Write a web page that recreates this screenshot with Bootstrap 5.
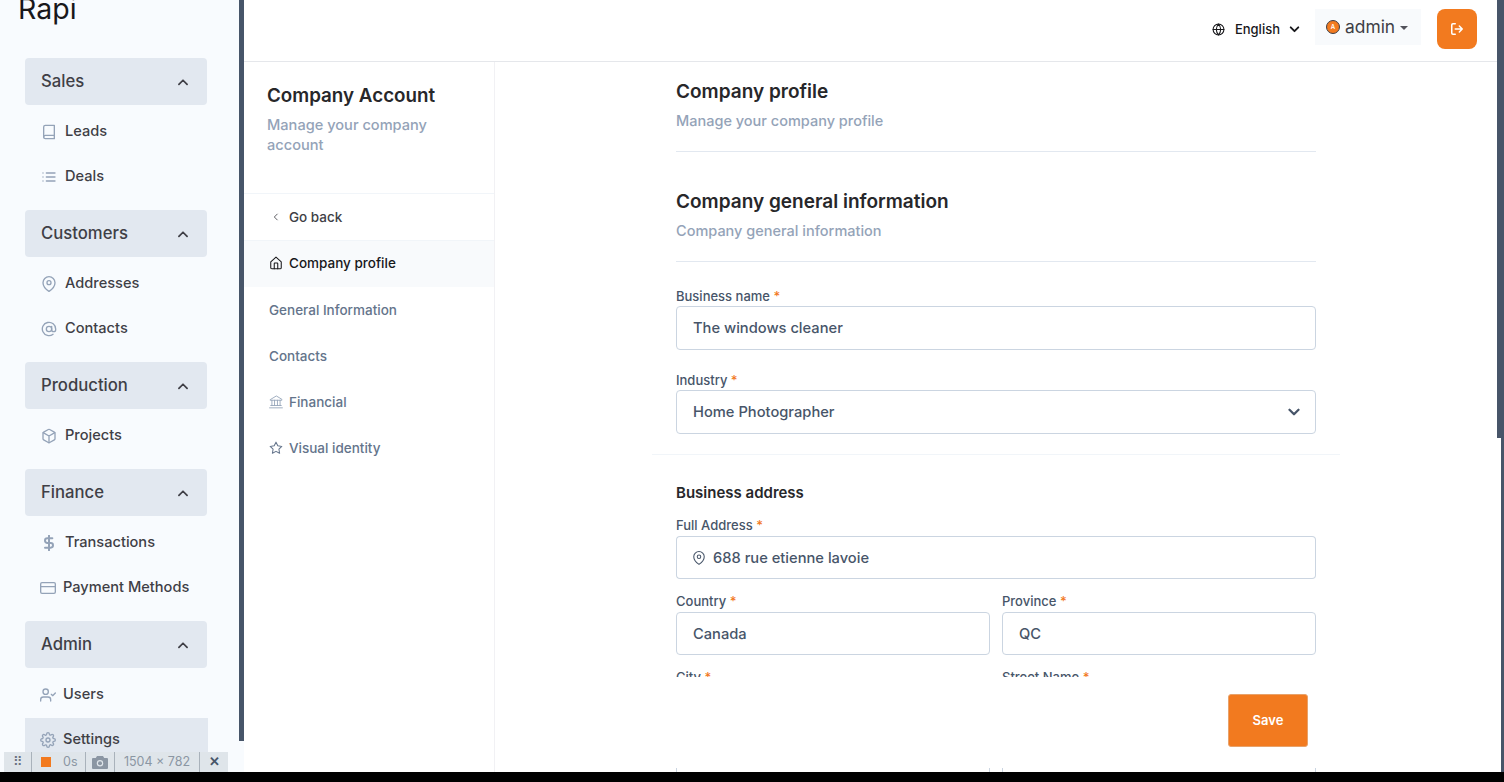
<!DOCTYPE html>
<html lang="en">
<head>
<meta charset="utf-8">
<title>Company profile</title>
<link rel="stylesheet" href="https://cdn.jsdelivr.net/npm/bootstrap@5.3.0/dist/css/bootstrap.min.css">
<style>
html,body{height:782px;overflow:hidden;background:#000;}
body{font-family:Inter,"Noto Sans",sans-serif;color:#334155;}
.ico{fill:none;stroke:currentColor;stroke-width:2;stroke-linecap:round;stroke-linejoin:round;flex:none;}
.app-shell{height:772px;background:#fff;position:relative;overflow:hidden;}
.side-bar{width:244px;flex:none;background:#f8fbfe;overflow:hidden;padding-left:25px;}
.brand-logo{font-size:28.5px;line-height:32px;color:#18181b;margin:-7px 0 11px -7px;height:54px;font-weight:400;}
.group-head{width:182px;height:47px;background:#e2e8f0;border-radius:4px;padding:1px 17px 0 16px;font-size:16.7px;font-weight:500;color:#3f3f46;}
.group-list{padding:5px 0 10px;width:183px;}
.side-link{height:42px;margin-bottom:3px;padding:2px 0 0 16px;font-size:14.6px;font-weight:500;color:#3f3f46;gap:8px;text-decoration:none;}
.side-link .ico{color:#94a3b8;}
.side-link.tight{padding-left:15px;gap:7px;}
.side-link.sel{background:#e2e8f0;}
.bar-side{position:absolute;left:239px;top:0;width:5px;height:741px;background:#475569;}
.bar-main-a{position:absolute;right:0;top:0;width:7px;height:438px;background:#475569;}
.bar-main-b{position:absolute;right:0;top:438px;width:3px;height:334px;background:#475569;}
.top-bar{height:62px;border-bottom:1px solid #e5e7eb;padding-right:27px;background:#fff;flex:none;}
.lang-pick{font-size:13px;font-weight:500;color:#18181b;margin-right:14px;margin-top:-2px;}
.admin-pick{width:106px;height:36px;background:#f8fafc;margin-right:16px;margin-top:-7px;padding-left:11px;font-size:17.4px;color:#3f3f46;}
.ava{width:14px;height:14px;border-radius:50%;background:#f27a1f;border:1.5px solid #3f3f46;color:#fff;font-size:6px;font-weight:600;line-height:1;margin-right:5px;}
.care{width:0;height:0;border-left:4.5px solid transparent;border-right:4.5px solid transparent;border-top:4.5px solid #52525b;margin-left:5px;margin-top:2px;}
.exit-btn{width:40px;height:40px;border-radius:8px;background:#f27a1f;border:0;padding:0;color:#fff;margin-top:-3px;}
.exit-btn:hover{background:#f27a1f;color:#fff;}
.sub-nav{width:251px;flex:none;border-right:1px solid #f1f1f4;}
.sub-head{height:132px;border-bottom:1px solid #f1f5f9;padding:22px 20px 0 23px;}
.sub-head h2{font-size:18.8px;font-weight:600;line-height:24px;color:#27272a;margin:0 0 7px;}
.sub-head p{font-size:14.6px;line-height:20px;color:#94a3b8;margin:0;font-weight:500;}
.sub-link{height:46px;padding-left:25px;font-size:13.5px;font-weight:500;color:#64748b;gap:6px;text-decoration:none;}
.sub-link.back{height:47px;color:#3f3f46;padding-left:27px;gap:8px;border-bottom:1px solid #f1f5f9;}
.sub-link.on{background:#f8fafc;color:#18181b;padding-bottom:2px;}
.form-pane{overflow:hidden;position:relative;}
.form-col{width:640px;margin-left:181px;padding-top:16px;}
.pane-title{font-size:19px;font-weight:600;line-height:28px;color:#27272a;margin:0 0 5px;}
.pane-sub{font-size:14.5px;line-height:20px;font-weight:500;color:#94a3b8;margin:0;padding-bottom:20px;border-bottom:1px solid #e2e8f0;}
.sec-gap{margin-top:36px;}
.pane-sub.push{margin-bottom:26px;}
.pick-label{font-size:13px;line-height:16px;font-weight:500;color:#475569;margin:0 0 2px;display:block;}
.pick-label i{font-style:normal;color:#f27a1f;}
.pick-label.second{margin-top:22px;}
.form-control.fld,.form-select.fld,.fld-group .input-group-text{height:44px;border-color:#cbd5e1;border-radius:4px;font-size:14.7px;font-weight:500;color:#475569;padding-left:16px;background-color:#fff;}
.form-select.fld{background-image:url("data:image/svg+xml,%3csvg xmlns='http://www.w3.org/2000/svg' viewBox='0 0 16 16'%3e%3cpath fill='none' stroke='%23475569' stroke-linecap='round' stroke-linejoin='round' stroke-width='3' d='m2 5 6 6 6-6'/%3e%3c/svg%3e");background-size:12px;background-position:right 15px center;}
.fld-group{margin-top:3px;}
.fld-group .input-group-text,.fld-group .form-control.fld,.pair-cell .form-control.fld{height:43px;}
.pair-cell .form-control.fld{margin-top:3px;}
.fld-group .input-group-text{border-right:0;padding:0 8px 0 15px;color:#475569;}
.fld-group .form-control.fld{border-left:0;padding-left:0;}
.full-rule{border-top:1px solid #f1f5f9;margin:20px -24px 0;}
.addr-title{font-size:15px;font-weight:600;color:#27272a;line-height:20px;margin:28px 0 14px;}
.pair-row{margin-top:14px;}
.pair-cell{width:314px;}
.save-strip{position:absolute;left:0;right:0;top:615px;height:91px;background:#fff;padding-right:196px;padding-top:17px;}
.save-btn{width:80px;height:53px;background:#f27a1f;border:1px solid #e8a26a;border-radius:3px;color:#fff;font-size:13px;font-weight:600;}
.save-btn:hover{background:#f27a1f;color:#fff;}
.rec-bar{position:absolute;left:4px;top:752px;width:224px;height:20px;background:#dfe5ea;color:#8b96a3;font-size:12.5px;line-height:1;z-index:5;white-space:nowrap;}
.rec-cell{height:20px;border-right:1px solid #a9b2bb;flex:none;}
.rec-stop{width:10px;height:10px;background:#f27a1f;display:block;}
.rec-grip{width:28px;color:#6b7280;}
.rec-state{width:54px;gap:12px;padding-left:9px;}
.rec-cam{width:29px;}
.rec-size{width:85px;}
.rec-close{width:28px;color:#475569;font-weight:700;}
.bottom-black{height:10px;background:#000;}
</style>
</head>
<body>
<svg width="0" height="0" class="position-absolute">
<symbol id="i-book" viewBox="0 0 24 24"><path d="M4 19.500A2.500 2.500 0 0 1 6.500 17H20"/><path d="M6.500 2H20v20H6.500A2.500 2.500 0 0 1 4 19.500v-15A2.500 2.500 0 0 1 6.500 2z"/></symbol>
<symbol id="i-list" viewBox="0 0 24 24"><path d="M8 6h13M8 12h13M8 18h13M3 6h.01M3 12h.01M3 18h.01"/></symbol>
<symbol id="i-pin" viewBox="0 0 24 24"><path d="M21 10c0 7-9 13-9 13s-9-6-9-13a9 9 0 0 1 18 0z"/><circle cx="12" cy="10" r="3"/></symbol>
<symbol id="i-at" viewBox="0 0 24 24"><circle cx="12" cy="12" r="4"/><path d="M16 8v5a3 3 0 0 0 6 0v-1a10 10 0 1 0-3.920 7.940"/></symbol>
<symbol id="i-box" viewBox="0 0 24 24"><path d="M21 16V8a2 2 0 0 0-1-1.730l-7-4a2 2 0 0 0-2 0l-7 4A2 2 0 0 0 3 8v8a2 2 0 0 0 1 1.730l7 4a2 2 0 0 0 2 0l7-4A2 2 0 0 0 21 16z"/><path d="M3.270 6.960 12 12.010l8.730-5.050M12 22.080V12"/></symbol>
<symbol id="i-dollar" viewBox="0 0 24 24"><path d="M12 1v22M17 5H9.500a3.500 3.500 0 0 0 0 7h5a3.500 3.500 0 0 1 0 7H6"/></symbol>
<symbol id="i-card" viewBox="0 0 24 24"><rect x="1" y="4" width="22" height="16" rx="2"/><path d="M1 10h22"/></symbol>
<symbol id="i-user" viewBox="0 0 24 24"><path d="M16 21v-2a4 4 0 0 0-4-4H5a4 4 0 0 0-4 4v2"/><circle cx="8.500" cy="7" r="4"/><path d="m17 11 2 2 4-4"/></symbol>
<symbol id="i-gear" viewBox="0 0 24 24"><circle cx="12" cy="12" r="3"/><path d="M19.400 15a1.650 1.650 0 0 0 .33 1.820l.06.06a2 2 0 0 1 0 2.830 2 2 0 0 1-2.830 0l-.06-.06a1.650 1.650 0 0 0-1.820-.33 1.650 1.650 0 0 0-1 1.510V21a2 2 0 0 1-2 2 2 2 0 0 1-2-2v-.09A1.650 1.650 0 0 0 9 19.400a1.650 1.650 0 0 0-1.820.33l-.06.06a2 2 0 0 1-2.830 0 2 2 0 0 1 0-2.830l.06-.06a1.650 1.650 0 0 0 .33-1.820 1.650 1.650 0 0 0-1.510-1H3a2 2 0 0 1-2-2 2 2 0 0 1 2-2h.09A1.650 1.650 0 0 0 4.600 9a1.650 1.650 0 0 0-.33-1.820l-.06-.06a2 2 0 0 1 0-2.830 2 2 0 0 1 2.830 0l.06.06a1.650 1.650 0 0 0 1.820.33H9a1.650 1.650 0 0 0 1-1.510V3a2 2 0 0 1 2-2 2 2 0 0 1 2 2v.09a1.650 1.650 0 0 0 1 1.510 1.650 1.650 0 0 0 1.820-.33l.06-.06a2 2 0 0 1 2.830 0 2 2 0 0 1 0 2.830l-.06.06a1.650 1.650 0 0 0-.33 1.820V9a1.650 1.650 0 0 0 1.510 1H21a2 2 0 0 1 2 2 2 2 0 0 1-2 2h-.09a1.650 1.650 0 0 0-1.510 1z"/></symbol>
<symbol id="i-home" viewBox="0 0 24 24"><path d="M3 10l9-8 9 8v10a2 2 0 0 1-2 2H5a2 2 0 0 1-2-2z"/><path d="M9 22v-9a1 1 0 0 1 1-1h4a1 1 0 0 1 1 1v9"/></symbol>
<symbol id="i-bank" viewBox="0 0 24 24"><path d="M12 2 2 8v1h20V8zM5 9v9M9.500 9v9M14.500 9v9M19 9v9M3 18h18M1 22h22"/></symbol>
<symbol id="i-star" viewBox="0 0 24 24"><path d="m12 2 3.090 6.260L22 9.270l-5 4.870 1.180 6.880L12 17.770l-6.180 3.250L7 14.140 2 9.270l6.910-1.010z"/></symbol>
<symbol id="i-globe" viewBox="0 0 24 24"><circle cx="12" cy="12" r="10"/><path d="M2 12h20M12 2a15.300 15.300 0 0 1 4 10 15.300 15.300 0 0 1-4 10 15.300 15.300 0 0 1-4-10 15.300 15.300 0 0 1 4-10z"/></symbol>
<symbol id="i-exit" viewBox="0 0 24 24"><path d="M9 21H5a2 2 0 0 1-2-2V5a2 2 0 0 1 2-2h4M16 17l5-5-5-5M21 12H9"/></symbol>
<symbol id="i-up" viewBox="0 0 24 24"><path d="m5 16 7-7 7 7"/></symbol>
<symbol id="i-down" viewBox="0 0 24 24"><path d="m5 8 7 7 7-7"/></symbol>
<symbol id="i-left" viewBox="0 0 24 24"><path d="m15 5-7 7 7 7"/></symbol>
</svg>

<div class="app-shell d-flex">
  <aside class="side-bar">
    <div class="brand-logo">Rapi</div>

    <div class="group-head d-flex align-items-center justify-content-between">Sales<svg class="ico" width="14" height="14" style="stroke-width:3"><use href="#i-up"/></svg></div>
    <div class="group-list">
      <a class="side-link d-flex align-items-center" href="#"><svg class="ico" width="16" height="16"><use href="#i-book"/></svg>Leads</a>
      <a class="side-link d-flex align-items-center" href="#"><svg class="ico" width="16" height="16"><use href="#i-list"/></svg>Deals</a>
    </div>

    <div class="group-head d-flex align-items-center justify-content-between">Customers<svg class="ico" width="14" height="14" style="stroke-width:3"><use href="#i-up"/></svg></div>
    <div class="group-list">
      <a class="side-link d-flex align-items-center" href="#"><svg class="ico" width="16" height="16"><use href="#i-pin"/></svg>Addresses</a>
      <a class="side-link d-flex align-items-center" href="#"><svg class="ico" width="16" height="16"><use href="#i-at"/></svg>Contacts</a>
    </div>

    <div class="group-head d-flex align-items-center justify-content-between">Production<svg class="ico" width="14" height="14" style="stroke-width:3"><use href="#i-up"/></svg></div>
    <div class="group-list">
      <a class="side-link d-flex align-items-center" href="#"><svg class="ico" width="16" height="16"><use href="#i-box"/></svg>Projects</a>
    </div>

    <div class="group-head d-flex align-items-center justify-content-between">Finance<svg class="ico" width="14" height="14" style="stroke-width:3"><use href="#i-up"/></svg></div>
    <div class="group-list">
      <a class="side-link d-flex align-items-center" href="#"><svg class="ico" width="16" height="16" style="stroke-width:3"><use href="#i-dollar"/></svg>Transactions</a>
      <a class="side-link tight d-flex align-items-center" href="#"><svg class="ico" width="16" height="16"><use href="#i-card"/></svg>Payment Methods</a>
    </div>

    <div class="group-head d-flex align-items-center justify-content-between">Admin<svg class="ico" width="14" height="14" style="stroke-width:3"><use href="#i-up"/></svg></div>
    <div class="group-list">
      <a class="side-link tight d-flex align-items-center" href="#"><svg class="ico" width="16" height="16"><use href="#i-user"/></svg>Users</a>
      <a class="side-link tight sel d-flex align-items-center" href="#"><svg class="ico" width="16" height="16"><use href="#i-gear"/></svg>Settings</a>
    </div>
  </aside>

  <div class="flex-grow-1 d-flex flex-column" style="min-width:0">
    <header class="top-bar d-flex align-items-center justify-content-end">
      <div class="lang-pick d-flex align-items-center"><svg class="ico" width="13" height="13" style="margin-right:10px;color:#18181b"><use href="#i-globe"/></svg>English<svg class="ico" width="13" height="13" style="stroke-width:3.5;margin-left:8px"><use href="#i-down"/></svg></div>
      <div class="admin-pick d-flex align-items-center"><span class="ava d-inline-flex align-items-center justify-content-center">A</span>admin<span class="care"></span></div>
      <button class="btn exit-btn d-flex align-items-center justify-content-center" type="button" aria-label="Log out"><svg class="ico" width="14" height="14" style="stroke-width:2.6"><use href="#i-exit"/></svg></button>
    </header>

    <div class="d-flex flex-grow-1" style="min-height:0">
      <nav class="sub-nav">
        <div class="sub-head">
          <h2>Company Account</h2>
          <p>Manage your company account</p>
        </div>
        <a class="sub-link back d-flex align-items-center" href="#"><svg class="ico" width="10" height="10"><use href="#i-left"/></svg>Go back</a>
        <a class="sub-link on d-flex align-items-center" href="#"><svg class="ico" width="14" height="14" style="stroke-width:1.8"><use href="#i-home"/></svg>Company profile</a>
        <a class="sub-link d-flex align-items-center" href="#">General Information</a>
        <a class="sub-link d-flex align-items-center" href="#">Contacts</a>
        <a class="sub-link d-flex align-items-center" href="#"><svg class="ico" width="14" height="14" style="stroke-width:1.5;color:#94a3b8"><use href="#i-bank"/></svg>Financial</a>
        <a class="sub-link d-flex align-items-center" href="#"><svg class="ico" width="14" height="14" style="stroke-width:1.8"><use href="#i-star"/></svg>Visual identity</a>
      </nav>

      <main class="form-pane flex-grow-1">
        <div class="form-col">
          <h3 class="pane-title">Company profile</h3>
          <p class="pane-sub">Manage your company profile</p>
          <h3 class="pane-title sec-gap">Company general information</h3>
          <p class="pane-sub push">Company general information</p>

          <label class="pick-label" for="f1">Business name <i>*</i></label>
          <input id="f1" class="form-control fld" value="The windows cleaner">
          <label class="pick-label second" for="f2">Industry <i>*</i></label>
          <select id="f2" class="form-select fld"><option>Home Photographer</option></select>
          <div class="full-rule"></div>

          <div class="addr-title">Business address</div>
          <label class="pick-label mb-0" for="f3">Full Address <i>*</i></label>
          <div class="input-group fld-group">
            <span class="input-group-text"><svg class="ico" width="14" height="14" style="stroke-width:1.8"><use href="#i-pin"/></svg></span>
            <input id="f3" class="form-control fld" value="688 rue etienne lavoie">
          </div>
          <div class="d-flex justify-content-between pair-row">
            <div class="pair-cell"><label class="pick-label mb-0" for="f4">Country <i>*</i></label><input id="f4" class="form-control fld" value="Canada"></div>
            <div class="pair-cell"><label class="pick-label mb-0" for="f5">Province <i>*</i></label><input id="f5" class="form-control fld" value="QC"></div>
          </div>
          <div class="d-flex justify-content-between pair-row">
            <div class="pair-cell"><label class="pick-label mb-0" for="f6">City <i>*</i></label><input id="f6" class="form-control fld"></div>
            <div class="pair-cell"><label class="pick-label mb-0" for="f7">Street Name <i>*</i></label><input id="f7" class="form-control fld"></div>
          </div>
          <div class="d-flex justify-content-between pair-row">
            <div class="pair-cell"><input class="form-control fld" aria-label="Postal code" style="margin-top:18px"></div>
            <div class="pair-cell"><input class="form-control fld" aria-label="Unit" style="margin-top:18px"></div>
          </div>
        </div>
        <div class="save-strip d-flex justify-content-end align-items-start">
          <button class="btn save-btn" type="button">Save</button>
        </div>
      </main>
    </div>
  </div>

  <div class="bar-side"></div>
  <div class="bar-main-a"></div>
  <div class="bar-main-b"></div>
</div>
<div class="bottom-black"></div>

<div class="rec-bar d-flex align-items-center">
  <span class="rec-cell rec-grip d-flex align-items-center justify-content-center">⠿</span>
  <span class="rec-cell rec-state d-flex align-items-center"><span class="rec-stop"></span>0s</span>
  <span class="rec-cell rec-cam d-flex align-items-center justify-content-center"><svg width="16" height="13" viewBox="0 0 16 13"><path fill="#8b96a3" d="M5 0h6l1.200 2H15a1 1 0 0 1 1 1v9a1 1 0 0 1-1 1H1a1 1 0 0 1-1-1V3a1 1 0 0 1 1-1h2.800z"/><circle cx="8" cy="7.200" r="3.200" fill="#dfe5ea"/><circle cx="8" cy="7.200" r="2" fill="#8b96a3"/></svg></span>
  <span class="rec-cell rec-size d-flex align-items-center justify-content-center">1504 x 782</span>
  <span class="rec-close d-flex align-items-center justify-content-center">✕</span>
</div>

<script src="https://cdn.jsdelivr.net/npm/bootstrap@5.3.0/dist/js/bootstrap.bundle.min.js"></script>
</body>
</html>
